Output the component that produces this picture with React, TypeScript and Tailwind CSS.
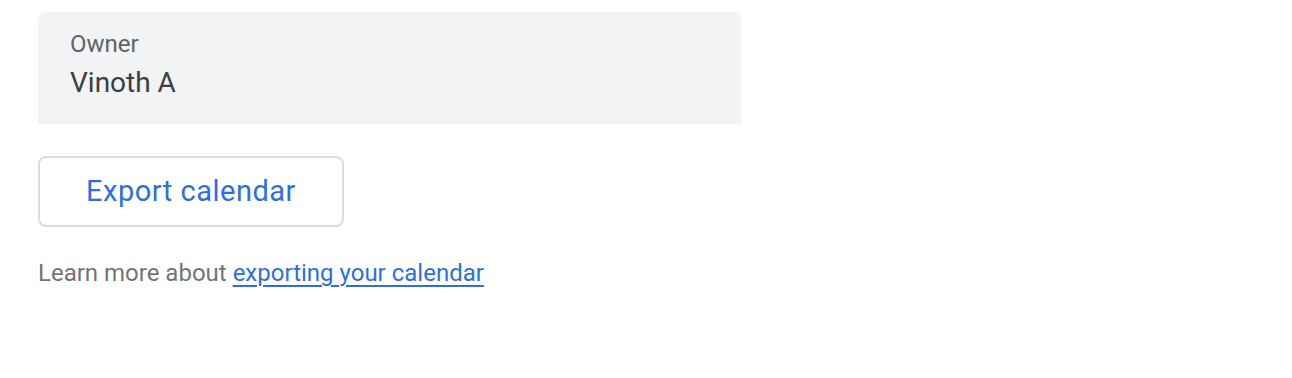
export default function App() {
  return (
    <div className="min-h-[378px] w-full bg-white pl-[38px] pt-[12px] font-['Roboto','Liberation_Sans',sans-serif]">
      {/* Owner field */}
      <div className="w-[703px] h-[112px] rounded-t-[8px] bg-[#f1f3f4] pl-[32px] pt-[16px]">
        <div className="text-[24px] leading-[32px] text-[#5f6368]">Owner</div>
        <div className="mt-[5px] text-[28px] leading-[36px] text-[#3c4043]">Vinoth A</div>
      </div>

      {/* Export button */}
      <button
        type="button"
        className="mt-[32px] flex h-[71px] w-[306px] items-center justify-center rounded-[8px] border-2 border-[#dadce0] bg-white text-[29px] font-normal tracking-[0.5px] text-[#2f6fdc]"
      >
        Export calendar
      </button>

      {/* Help text */}
      <p className="mt-[30px] text-[24px] leading-[32px] text-[#70757a]">
        Learn more about{" "}
        <a href="#" className="text-[#2f6fdc] underline decoration-2 underline-offset-[4px]">
          exporting your calendar
        </a>
      </p>
    </div>
  );
}
